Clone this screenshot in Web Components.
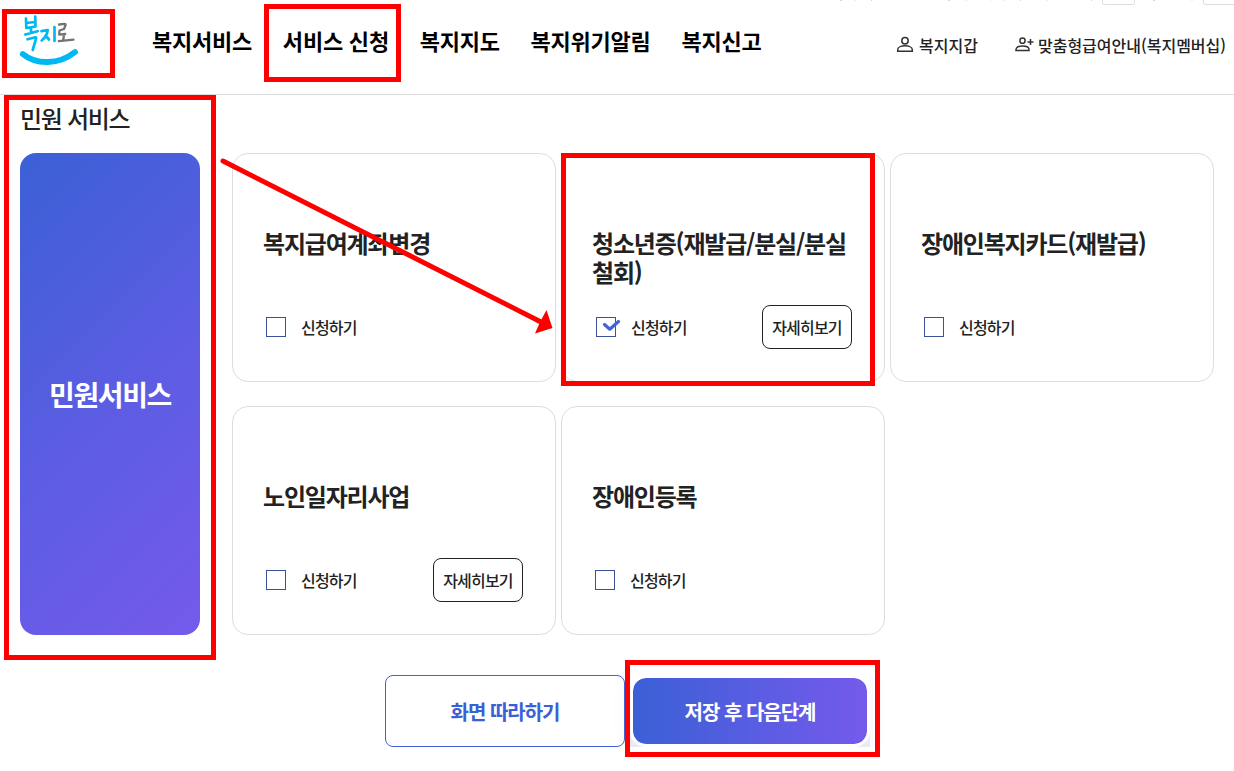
<!DOCTYPE html>
<html lang="ko">
<head>
<meta charset="utf-8">
<title>복지로</title>
<style>
    body {
        margin: 0;
        width: 1234px;
        height: 771px;
        overflow: hidden;
        background: #fff;
        color: #222;
        font-family: "Noto Sans CJK KR", sans-serif;
    }
</style>
</head>
<body>
<app-page>
    <page-header slot="header">
        <nav-item slot="menu">복지서비스</nav-item>
        <nav-item slot="menu">서비스 신청</nav-item>
        <nav-item slot="menu">복지지도</nav-item>
        <nav-item slot="menu">복지위기알림</nav-item>
        <nav-item slot="menu">복지신고</nav-item>
        <util-link slot="util" icon="person">복지지갑</util-link>
        <util-link slot="util" icon="person-add">맞춤형급여안내(복지멤버십)</util-link>
    </page-header>

    <service-section heading="민원 서비스" category="민원서비스">
        <service-card>복지급여계좌변경</service-card>
        <service-card checked detail>청소년증(재발급/분실/분실철회)</service-card>
        <service-card>장애인복지카드(재발급)</service-card>
        <service-card detail>노인일자리사업</service-card>
        <service-card>장애인등록</service-card>
    </service-section>

    <action-bar slot="actions">
        <action-button>화면 따라하기</action-button>
        <action-button primary>저장 후 다음단계</action-button>
    </action-bar>

    <guide-marks slot="guide"></guide-marks>
</app-page>

<script>
class AppPage extends HTMLElement {

    constructor() {
        super()
        this.shadow = this.attachShadow({ mode: 'open' })
    }

    connectedCallback() {
        this.render()
    }

    render() {
        this.shadow.innerHTML =
      /*html*/`
      <style>
        :host{
            display:flex;
            flex-direction:column;
            position:relative;
            width:1234px;
            height:771px;
            overflow:hidden;
        }
      </style>

      <slot name="header"></slot>
      <slot></slot>
      <slot name="actions"></slot>
      <slot name="guide"></slot>
      `
    }
}

class PageHeader extends HTMLElement {

    constructor() {
        super()
        this.shadow = this.attachShadow({ mode: 'open' })
    }

    connectedCallback() {
        this.render()
    }

    render() {
        this.shadow.innerHTML =
      /*html*/`
      <style>
        :host{
            display:flex;
            box-sizing:border-box;
            position:relative;
            width:1234px;
            height:95px;
            border-bottom:1px solid #ddd;
        }

        .logo{
            display:block;
            width:64px;
            height:60px;
            margin:10px 0 0 17px;
        }

        .menu{
            display:flex;
            gap:30.75px;
            margin:23px 0 0 71px;
        }

        .util{
            display:flex;
            gap:36px;
            margin:33px 8px 0 auto;
        }

        /* bottom edge of the scrolled-away top bar */
        .top-edge{
            position:absolute;
            left:820px;
            top:0;
        }
      </style>

      <svg class="logo" viewBox="17 10 64 60" fill="none" stroke-linecap="round" stroke-linejoin="round">
        <g stroke="#00b9f2" stroke-width="2.700">
          <path d="M26 18.500l.3 9.500 9.200-1.500L35.200 16.500M26.300 23l8.700-1M31 28v4.500M25.300 34.500l12.400-3.300M27.500 39.300l8-2q1 0 .5 1.500l-3.300 11.200"/>
          <path d="M41.500 31.200l6.200-1.200c-.5 4-2.700 8-6 10.500M45.500 35.500l3.500 4M54.500 27v14"/>
        </g>
        <path stroke="#737476" stroke-width="2.300" d="M59 24.500l5.500-.7q1.500 0 1 1.500l-1.500 3.700-4.500 1.500-.3 4.200 6-.7M64 35l-.8 5M58.800 41.200l14.700-1.500"/>
        <path stroke="#00b9f2" stroke-width="5.800" d="M22.800 54C36 65 59 65 75 52"/>
      </svg>
      <div class="menu"><slot name="menu"></slot></div>
      <div class="util"><slot name="util"></slot></div>
      <svg class="top-edge" width="414" height="6" fill="none" stroke="#ddd">
        <path d="M282.500 -5V2.500q0 2 2 2h28q2 0 2-2V-5M383.500 -5V2.500q0 2 2 2h40"/>
        <path stroke="#d5d5dd" d="M20 .5h2M51 .5h1M128 .5h2M200 .5h1M271 .5h1M333 .5h2"/>
        <path stroke="#eee" d="M34 .5h2M145 .5h2M171 .5h1M183 .5h2M226 .5h2M371 .5h2"/>
      </svg>
      `
    }
}

class NavItem extends HTMLElement {

    constructor() {
        super()
        this.shadow = this.attachShadow({ mode: 'open' })
    }

    connectedCallback() {
        this.render()
    }

    render() {
        this.shadow.innerHTML =
      /*html*/`
      <style>
        :host{
            display:block;
            color:#000;
            font-size:22px;
            font-weight:700;
            line-height:34px;
            letter-spacing:-0.22px;
            white-space:nowrap;
        }
      </style>
      <slot></slot>
      `
    }
}

class UtilLink extends HTMLElement {

    constructor() {
        super()
        this.shadow = this.attachShadow({ mode: 'open' })
    }

    connectedCallback() {
        this.render()
    }

    render() {
        const icons = {
            'person': '<circle cx="9" cy="4.700" r="3.200"/><path d="M1.700 15.300v-1.500c0-2.500 3.500-4 7.300-4s7.300 1.500 7.300 4v1.500z"/>',
            'person-add': '<circle cx="7.500" cy="4.700" r="2.600"/><path d="M1 14.500v-1c0-2.200 3.100-3.500 6.500-3.500s6.500 1.300 6.500 3.500v1zM15.500 3v6M12.500 6h6"/>'
        }

        this.shadow.innerHTML =
      /*html*/`
      <style>
        :host{
            display:flex;
            align-items:center;
            gap:4px;
            height:24px;
            font-size:16px;
            font-weight:500;
            line-height:24px;
            white-space:nowrap;
        }

        :host([icon="person"]){
            margin-right:1px;
        }

        svg{
            display:block;
        }
      </style>
      <svg width="19" height="18" fill="none" stroke="#333" stroke-width="1.500">${icons[this.getAttribute('icon')]}</svg>
      <span><slot></slot></span>
      `
    }
}

class ServiceSection extends HTMLElement {

    constructor() {
        super()
        this.shadow = this.attachShadow({ mode: 'open' })
    }

    connectedCallback() {
        this.render()
    }

    render() {
        this.shadow.innerHTML =
      /*html*/`
      <style>
        :host{
            display:block;
            padding:0 20px;
        }

        h2{
            height:58px;
            margin:0;
            font-size:24px;
            font-weight:500;
            line-height:45px;
            letter-spacing:-0.055em;
        }

        .content{
            display:flex;
            gap:32px;
            height:482px;
        }

        .category{
            display:flex;
            align-items:center;
            justify-content:center;
            width:180px;
            border-radius:16px;
            background:linear-gradient(135deg, #3b60d6 0%, #5b5de2 50%, #755aec 100%);
            color:#fff;
            font-size:28px;
            font-weight:700;
            letter-spacing:-0.05em;
        }

        .cards{
            display:grid;
            grid-template-columns:repeat(3, 324px);
            grid-template-rows:repeat(2, 229px);
            gap:24px 5px;
        }
      </style>

      <h2>${this.getAttribute('heading')}</h2>
      <div class="content">
        <div class="category">${this.getAttribute('category')}</div>
        <div class="cards"><slot></slot></div>
      </div>
      `
    }
}

class ServiceCard extends HTMLElement {

    constructor() {
        super()
        this.shadow = this.attachShadow({ mode: 'open' })
    }

    connectedCallback() {
        this.render()
    }

    render() {
        this.shadow.innerHTML =
      /*html*/`
      <style>
        :host{
            display:flex;
            flex-direction:column;
            box-sizing:border-box;
            padding:74px 32px 32px 30px;
            border:1px solid #ddd;
            border-radius:16px;
            letter-spacing:-0.05em;
        }

        h3{
            margin:0;
            height:77px;
            font-size:24px;
            font-weight:700;
            line-height:29px;
            letter-spacing:-0.05em;
            word-break:break-all;
        }

        .row{
            display:flex;
            align-items:center;
            height:44px;
        }

        .box{
            display:block;
            width:26px;
            height:20px;
            margin-left:3px;
        }

        :host([checked]) .box{
            margin-left:4px;
        }

        .label{
            margin-left:9px;
            font-size:16px;
            font-weight:500;
        }

        .detail{
            box-sizing:border-box;
            width:90px;
            height:44px;
            margin-left:auto;
            padding:0;
            border:1px solid #222;
            border-radius:8px;
            background:#fff;
            color:#222;
            font:500 16px "Noto Sans CJK KR", sans-serif;
            letter-spacing:-0.05em;
        }
      </style>

      <h3><slot></slot></h3>
      <div class="row">
        <svg class="box" fill="none">
          <rect x=".5" y=".5" width="19" height="19" stroke="#3b5299"/>
          ${this.hasAttribute('checked') ? '<path d="M8.500 7.500l5.300 4.700L22.500 4.500" stroke="#4263dc" stroke-width="3.200" stroke-linecap="round" stroke-linejoin="round"/>' : ''}
        </svg>
        <span class="label">신청하기</span>
        ${this.hasAttribute('detail') ? '<button class="detail">자세히보기</button>' : ''}
      </div>
      `
    }
}

class ActionBar extends HTMLElement {

    constructor() {
        super()
        this.shadow = this.attachShadow({ mode: 'open' })
    }

    connectedCallback() {
        this.render()
    }

    render() {
        this.shadow.innerHTML =
      /*html*/`
      <style>
        :host{
            display:flex;
            gap:5px;
            margin:40px 0 0 385px;
        }
      </style>
      <slot></slot>
      `
    }
}

class ActionButton extends HTMLElement {

    constructor() {
        super()
        this.shadow = this.attachShadow({ mode: 'open' })
    }

    connectedCallback() {
        this.render()
    }

    render() {
        this.shadow.innerHTML =
      /*html*/`
      <style>
        :host{
            display:block;
            width:240px;
            height:72px;
        }

        button{
            box-sizing:border-box;
            width:100%;
            height:100%;
            padding:0;
            border:1px solid #4263d5;
            border-radius:8px;
            background:#fff;
            color:#3b60d6;
            font:700 20px "Noto Sans CJK KR", sans-serif;
            letter-spacing:-0.05em;
        }

        :host([primary]) button{
            border:3px solid #fff;
            border-radius:16px;
            background:linear-gradient(90deg, #3b60d6, #755aec) padding-box;
            color:#fff;
        }

        :host([primary]){
            background:linear-gradient(#fff 20%, #e9e8f7);
            box-shadow:0 0 20px rgba(100, 90, 220, .07);
            clip-path:inset(0 -20px 0 -20px);
        }
      </style>
      <button><slot></slot></button>
      `
    }
}

/* red boxes and arrow showing the order of the steps */
class GuideMarks extends HTMLElement {

    constructor() {
        super()
        this.shadow = this.attachShadow({ mode: 'open' })
    }

    connectedCallback() {
        this.render()
    }

    render() {
        this.shadow.innerHTML =
      /*html*/`
      <style>
        :host{
            display:block;
            position:absolute;
            inset:0;
            pointer-events:none;
        }
      </style>
      <svg width="1234" height="771" fill="none" stroke="#f00" stroke-width="5">
        <rect x="4.500" y="11.500" width="108" height="64"/>
        <rect x="266.500" y="6.500" width="132" height="73"/>
        <rect x="6.500" y="97.500" width="207" height="560"/>
        <rect x="563.500" y="155.500" width="309" height="228"/>
        <rect x="627.500" y="662.500" width="250" height="92"/>
        <path d="M223 161L543 323" stroke-linecap="round"/>
        <path d="M546.500 310L552.500 328L535 333.500L540 322Z" fill="#f00" stroke="none"/>
      </svg>
      `
    }
}

customElements.define('app-page', AppPage);
customElements.define('page-header', PageHeader);
customElements.define('nav-item', NavItem);
customElements.define('util-link', UtilLink);
customElements.define('service-section', ServiceSection);
customElements.define('service-card', ServiceCard);
customElements.define('action-bar', ActionBar);
customElements.define('action-button', ActionButton);
customElements.define('guide-marks', GuideMarks);
</script>
</body>
</html>
